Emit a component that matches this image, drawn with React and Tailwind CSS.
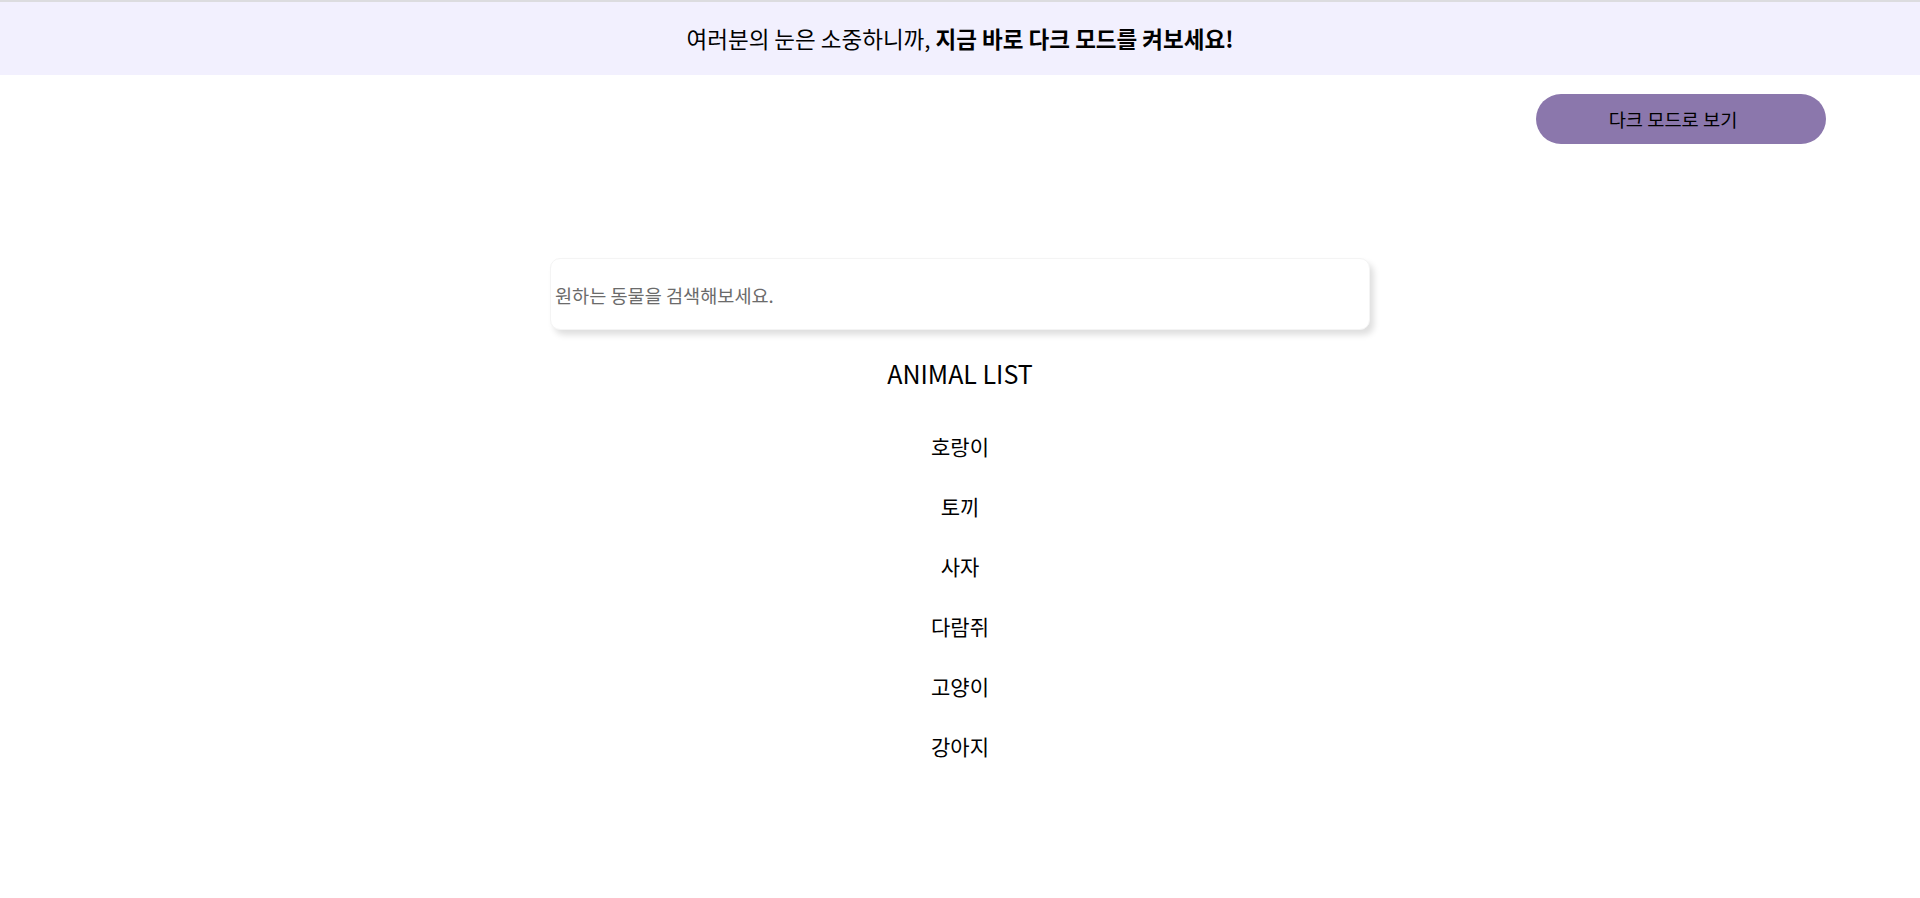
import { useState } from "react";

const animals = ["호랑이", "토끼", "사자", "다람쥐", "고양이", "강아지"];

export default function App() {
  const [query, setQuery] = useState("");

  const filtered = animals.filter((a) => a.includes(query));

  return (
    <div className="min-h-screen bg-white text-black font-['Noto_Sans_CJK_KR','Noto_Sans',sans-serif]">
      <div className="h-[75px] border-t-2 border-[#dcdcdf] bg-[#f2f0fe] flex items-center justify-center">
        <p className="text-[22.5px] leading-none">
          여러분의 눈은 소중하니까, <b className="font-bold">지금 바로 다크 모드를 켜보세요!</b>
        </p>
      </div>

      <div className="mt-[19px] flex justify-end pr-[94px]">
        <button className="w-[290px] h-[50px] rounded-full bg-[#8b77ac] pr-[16px] text-[18.7px] text-black">
          다크 모드로 보기
        </button>
      </div>

      <div className="mt-[114px] flex justify-center">
        <input
          type="text"
          value={query}
          onChange={(e) => setQuery(e.target.value)}
          placeholder="원하는 동물을 검색해보세요."
          className="w-[820px] h-[72px] rounded-[10px] bg-white px-1 text-[18.6px] placeholder:text-[#6b6b6b] outline-none shadow-[4px_5px_6px_rgba(0,0,0,0.13)] border border-[#f4f4f4]"
        />
      </div>

      <h2 className="mt-[25px] text-center text-[25px] leading-[36px]">ANIMAL LIST</h2>

      <ul className="mt-[40px] flex flex-col items-center gap-[30px]">
        {filtered.map((a) => (
          <li key={a} className="text-[21px] leading-[30px]">
            {a}
          </li>
        ))}
      </ul>
    </div>
  );
}
